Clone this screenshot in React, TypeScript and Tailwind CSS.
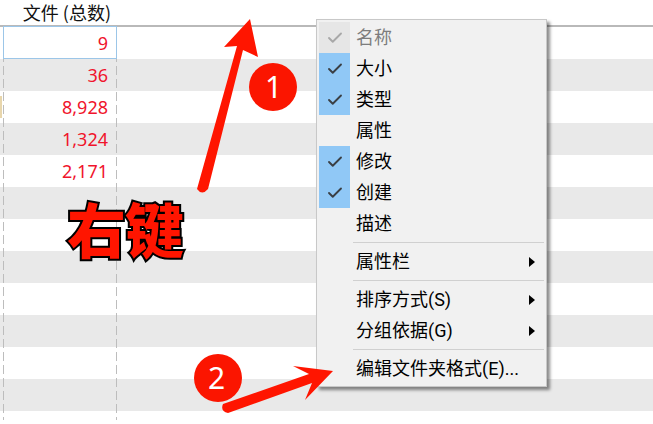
import { Check } from 'lucide-react';

const counts = ['9', '36', '8,928', '1,324', '2,171', '', '', '', '', '', '', '', ''];

const cjk = "font-['Noto_Sans_CJK_SC','Noto_Sans',sans-serif]";

function MenuItem({ label, checked, disabled, arrow }: { label: string; checked?: boolean; disabled?: boolean; arrow?: boolean }) {
  return (
    <div className="flex h-[31px] items-center">
      <div className={`flex h-full w-[31px] items-center justify-center ${checked ? (disabled ? 'bg-[#e6e6e6]' : 'bg-[#90c8f6]') : ''}`}>
        {checked && <Check className={`h-[18px] w-[18px] ${disabled ? 'text-[#a8a8a8]' : 'text-[#3a3f44]'}`} strokeWidth={2.5} />}
      </div>
      <span className={`ml-[6px] font-['Roboto','Noto_Sans_CJK_SC',sans-serif] text-[18px] leading-none ${disabled ? 'text-[#7d7d7d]' : 'text-black'}`}>{label}</span>
      {arrow && <span className="ml-auto mr-[9px] h-0 w-0 border-y-[5px] border-l-[6px] border-y-transparent border-l-black" />}
    </div>
  );
}

function Separator() {
  return <div className="my-[3px] ml-[34px] h-px bg-[#d0d0d0]" />;
}

export default function App() {
  return (
    <div className={`relative h-[424px] w-[653px] overflow-hidden bg-white ${cjk}`}>
      {/* Header */}
      <div className="flex h-[27px] border-b-2 border-[#b9b9b9]">
        <div className="w-[111px] text-right text-[18px] leading-[25px] text-[#111]">文件 (总数)</div>
      </div>

      {/* Rows */}
      <div>
        {counts.map((count, i) => (
          <div key={i} className={`flex h-[32px] items-center ${i % 2 === 1 ? 'bg-[#e9e9e9]' : 'bg-white'}`}>
            <div className="-mt-[1px] w-[108px] text-right font-['Noto_Sans',sans-serif] text-[18px] leading-none text-[#f0142c]">{count}</div>
          </div>
        ))}
      </div>

      {/* Column guides and selection */}
      <div className="absolute left-[3px] top-[27px] h-[393px] w-px bg-[repeating-linear-gradient(to_bottom,#bdbdbd_0_9px,transparent_9px_13px)]" />
      <div className="absolute left-[116px] top-[27px] h-[393px] w-px bg-[repeating-linear-gradient(to_bottom,#bdbdbd_0_9px,transparent_9px_13px)]" />
      <div className="absolute left-[3px] top-[26px] h-[33px] w-[114px] border border-[#9cc6e8]" />
      <div className="absolute left-0 top-[96px] h-[22px] w-[2px] bg-[#e8d6ac]" />

      {/* Context menu */}
      <div className="absolute left-[316px] top-[19px] flex w-[231px] flex-col border border-[#c8c8c8] bg-[#f1f1f1] p-[2px] shadow-[3px_3px_3px_rgba(0,0,0,0.45)]">
        <MenuItem label="名称" checked disabled />
        <MenuItem label="大小" checked />
        <MenuItem label="类型" checked />
        <MenuItem label="属性" />
        <MenuItem label="修改" checked />
        <MenuItem label="创建" checked />
        <MenuItem label="描述" />
        <Separator />
        <MenuItem label="属性栏" arrow />
        <Separator />
        <MenuItem label="排序方式(S)" arrow />
        <MenuItem label="分组依据(G)" arrow />
        <Separator />
        <MenuItem label="编辑文件夹格式(E)..." />
      </div>

      {/* Annotations */}
      <svg className="absolute inset-0" width="653" height="424" viewBox="0 0 653 424">
        <path d="M197 189 Q202 196 208 189 L243 50 L258 57 L250 19 L224 47 L237 46 Z" fill="#ff1500" />
        <circle cx="273" cy="87" r="24" fill="#fb1500" />
        <circle cx="218" cy="378" r="24" fill="#fb1500" />
        <path d="M223 404 Q220 411 228 413 L312 383 L305 400 L333 371 L293 366 L309 374 Z" fill="#ff1500" />
      </svg>
      <span className="absolute left-[265px] top-[66px] font-['Noto_Sans',sans-serif] text-[30px] leading-[42px] text-white">1</span>
      <span className="absolute left-[208px] top-[357px] font-['Noto_Sans',sans-serif] text-[30px] leading-[42px] text-white">2</span>
      <span className="absolute left-[67px] top-[188px] text-[59px] font-black leading-[80px] tracking-[-1px] text-[#ff1500] [-webkit-text-stroke:4px_#000] [paint-order:stroke_fill]">右键</span>
    </div>
  );
}
